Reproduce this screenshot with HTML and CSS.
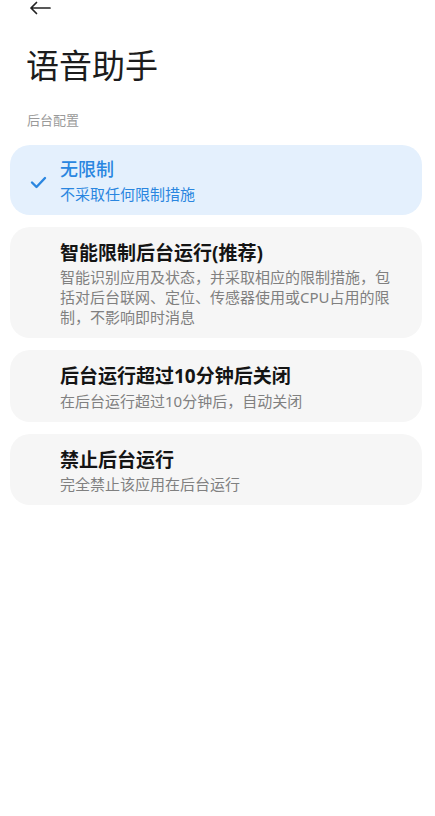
FILE: index.html
```html
<!DOCTYPE html>
<html lang="zh-CN">

<head>
    <meta charset="UTF-8">
    <meta name="viewport" content="width=device-width, initial-scale=1.0">
    <title>语音助手</title>
    <link rel="stylesheet" href="styles.css">
</head>

<body>
    <div class="top-bar">
        <svg class="back" width="22" height="14" viewBox="0 0 22 14">
            <path d="M21 7H2M7.5 1.5L2 7l5.5 5.5" fill="none" stroke="#222" stroke-width="1.7"
                stroke-linecap="round" stroke-linejoin="round" />
        </svg>
    </div>

    <h1>语音助手</h1>
    <p class="section-label">后台配置</p>

    <div class="options">
        <div class="option selected">
            <span class="mark">
                <svg width="17" height="13" viewBox="0 0 17 13">
                    <path d="M2 6.5l4.5 4.5L15 2" fill="none" stroke="#2a86e0" stroke-width="2.4"
                        stroke-linecap="round" stroke-linejoin="round" />
                </svg>
            </span>
            <div class="text">
                <p class="title">无限制</p>
                <p class="desc">不采取任何限制措施</p>
            </div>
        </div>
        <div class="option">
            <span class="mark"></span>
            <div class="text">
                <p class="title">智能限制后台运行(推荐)</p>
                <p class="desc">智能识别应用及状态，并采取相应的限制措施，包括对后台联网、定位、传感器使用或CPU占用的限制，不影响即时消息</p>
            </div>
        </div>
        <div class="option">
            <span class="mark"></span>
            <div class="text">
                <p class="title">后台运行超过10分钟后关闭</p>
                <p class="desc">在后台运行超过10分钟后，自动关闭</p>
            </div>
        </div>
        <div class="option">
            <span class="mark"></span>
            <div class="text">
                <p class="title">禁止后台运行</p>
                <p class="desc">完全禁止该应用在后台运行</p>
            </div>
        </div>
    </div>
</body>

</html>
```

FILE: styles.css
```css
* {
    margin: 0;
    padding: 0;
    box-sizing: border-box;
    font-family: "Noto Sans", "Noto Sans CJK SC", sans-serif;
}

body {
    background-color: white;
    color: #1a1a1a;
}

.top-bar {
    height: 16px;
    padding-left: 29px;
    display: flex;
    align-items: center;
}

.back {
    display: block;
}

h1 {
    margin-top: 28px;
    padding-left: 26px;
    font-size: 33px;
    font-weight: 400;
    line-height: 44px;
    color: #1c1c1c;
}

.section-label {
    margin-top: 23px;
    padding-left: 27px;
    font-size: 13px;
    line-height: 18px;
    color: #9a9a9a;
}

.options {
    margin-top: 16px;
    padding: 0 13px 0 10px;
    display: flex;
    flex-direction: column;
    gap: 12px;
}

.option {
    display: flex;
    align-items: center;
    padding: 14px 28px 11px 20px;
    background-color: #f6f6f6;
    border-radius: 20px;
}

.option.selected {
    padding-top: 12px;
    background-color: #e4f0fd;
}

.mark {
    width: 30px;
    flex-shrink: 0;
    display: flex;
    align-items: center;
    padding-top: 4px;
}

.text {
    flex: 1;
}

.title {
    font-size: 19px;
    font-weight: 700;
    line-height: 24px;
    color: #141414;
}

.desc {
    margin-top: 2.5px;
    font-size: 15px;
    line-height: 20px;
    color: #808080;
}

.selected .title {
    font-size: 18px;
    font-weight: 500;
    color: #2a86e0;
}

.selected .desc {
    color: #2a86e0;
}
```
